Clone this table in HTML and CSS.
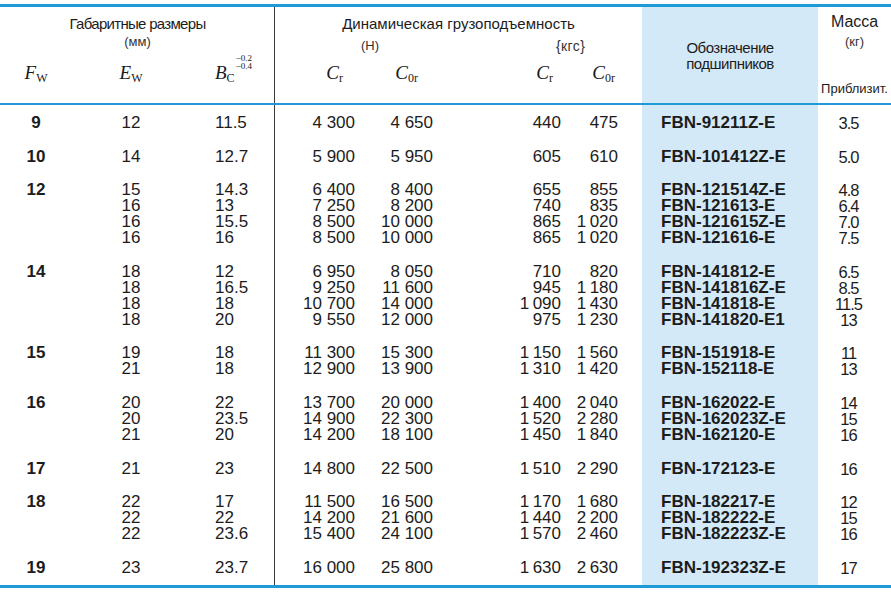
FILE: index.html
```html
<!DOCTYPE html>
<html lang="ru">
<head>
<meta charset="utf-8">
<title>Подшипники FBN</title>
<link rel="stylesheet" href="styles.css">
</head>
<body>
<table class="spec">
  <colgroup>
    <col class="w1"><col class="w2"><col class="w3"><col class="w4"><col class="w5"><col class="w6"><col class="w7"><col class="w8"><col class="w9">
  </colgroup>
  <thead>
    <tr class="hr1">
      <th colspan="3" class="grp grp-a sep">Габаритные размеры</th>
      <th colspan="4" class="grp">Динамическая грузоподъемность</th>
      <th rowspan="3" class="desig-h">Обозначение<br>подшипников</th>
      <th rowspan="3" class="mass-h">
        <div class="mass-t">Масса</div>
        <div class="mass-u">(кг)</div>
        <div class="approx">Приблизит.</div>
      </th>
    </tr>
    <tr class="hr2">
      <th colspan="3" class="unit sep">(мм)</th>
      <th colspan="2" class="unit u-n">(Н)</th>
      <th colspan="2" class="unit u-k">{кгс}</th>
    </tr>
    <tr class="hr3">
      <th class="sym s1"><i>F</i><sub>W</sub></th>
      <th class="sym s2"><i>E</i><sub>W</sub></th>
      <th class="sym s3 sep"><i>B</i><sub>C</sub><span class="tol"><span>−0.2</span><span>−0.4</span></span></th>
      <th class="sym s4"><i>C</i><sub>r</sub></th>
      <th class="sym s5"><i>C</i><sub>0r</sub></th>
      <th class="sym s6"><i>C</i><sub>r</sub></th>
      <th class="sym s7"><i>C</i><sub>0r</sub></th>
    </tr>
  </thead>
  <tbody>
    <tr class="first">
      <td class="c1">9</td><td class="c2">12</td><td class="c3 sep">11.5</td>
      <td class="c4">4 300</td><td class="c5">4 650</td><td class="c6">440</td><td class="c7">475</td>
      <td class="c8">FBN-91211Z-E</td><td class="c9">3.5</td>
    </tr>
    <tr>
      <td class="c1">10</td><td class="c2">14</td><td class="c3 sep">12.7</td>
      <td class="c4">5 900</td><td class="c5">5 950</td><td class="c6">605</td><td class="c7">610</td>
      <td class="c8">FBN-101412Z-E</td><td class="c9">5.0</td>
    </tr>
    <tr>
      <td class="c1">12</td><td class="c2">15<br>16<br>16<br>16</td><td class="c3 sep">14.3<br>13<br>15.5<br>16</td>
      <td class="c4">6 400<br>7 250<br>8 500<br>8 500</td><td class="c5">8 400<br>8 200<br>10 000<br>10 000</td>
      <td class="c6">655<br>740<br>865<br>865</td><td class="c7">855<br>835<br>1&thinsp;020<br>1&thinsp;020</td>
      <td class="c8">FBN-121514Z-E<br>FBN-121613-E<br>FBN-121615Z-E<br>FBN-121616-E</td><td class="c9">4.8<br>6.4<br>7.0<br>7.5</td>
    </tr>
    <tr>
      <td class="c1">14</td><td class="c2">18<br>18<br>18<br>18</td><td class="c3 sep">12<br>16.5<br>18<br>20</td>
      <td class="c4">6 950<br>9 250<br>10 700<br>9 550</td><td class="c5">8 050<br>11 600<br>14 000<br>12 000</td>
      <td class="c6">710<br>945<br>1&thinsp;090<br>975</td><td class="c7">820<br>1&thinsp;180<br>1&thinsp;430<br>1&thinsp;230</td>
      <td class="c8">FBN-141812-E<br>FBN-141816Z-E<br>FBN-141818-E<br>FBN-141820-E1</td><td class="c9">6.5<br>8.5<br>11.5<br>13</td>
    </tr>
    <tr>
      <td class="c1">15</td><td class="c2">19<br>21</td><td class="c3 sep">18<br>18</td>
      <td class="c4">11 300<br>12 900</td><td class="c5">15 300<br>13 900</td>
      <td class="c6">1&thinsp;150<br>1&thinsp;310</td><td class="c7">1&thinsp;560<br>1&thinsp;420</td>
      <td class="c8">FBN-151918-E<br>FBN-152118-E</td><td class="c9">11<br>13</td>
    </tr>
    <tr>
      <td class="c1">16</td><td class="c2">20<br>20<br>21</td><td class="c3 sep">22<br>23.5<br>20</td>
      <td class="c4">13 700<br>14 900<br>14 200</td><td class="c5">20 000<br>22 300<br>18 100</td>
      <td class="c6">1&thinsp;400<br>1&thinsp;520<br>1&thinsp;450</td><td class="c7">2&thinsp;040<br>2&thinsp;280<br>1&thinsp;840</td>
      <td class="c8">FBN-162022-E<br>FBN-162023Z-E<br>FBN-162120-E</td><td class="c9">14<br>15<br>16</td>
    </tr>
    <tr>
      <td class="c1">17</td><td class="c2">21</td><td class="c3 sep">23</td>
      <td class="c4">14 800</td><td class="c5">22 500</td><td class="c6">1&thinsp;510</td><td class="c7">2&thinsp;290</td>
      <td class="c8">FBN-172123-E</td><td class="c9">16</td>
    </tr>
    <tr>
      <td class="c1">18</td><td class="c2">22<br>22<br>22</td><td class="c3 sep">17<br>22<br>23.6</td>
      <td class="c4">11 500<br>14 200<br>15 400</td><td class="c5">16 500<br>21 600<br>24 100</td>
      <td class="c6">1&thinsp;170<br>1&thinsp;440<br>1&thinsp;570</td><td class="c7">1&thinsp;680<br>2&thinsp;200<br>2&thinsp;460</td>
      <td class="c8">FBN-182217-E<br>FBN-182222-E<br>FBN-182223Z-E</td><td class="c9">12<br>15<br>16</td>
    </tr>
    <tr class="last">
      <td class="c1">19</td><td class="c2">23</td><td class="c3 sep">23.7</td>
      <td class="c4">16 000</td><td class="c5">25 800</td><td class="c6">1&thinsp;630</td><td class="c7">2&thinsp;630</td>
      <td class="c8">FBN-192323Z-E</td><td class="c9">17</td>
    </tr>
  </tbody>
</table>
</body>
</html>
```

FILE: styles.css
```css
html, body {
  margin: 0;
  padding: 0;
  background: #ffffff;
}

body {
  font-family: "Liberation Sans", Arial, sans-serif;
  color: #1c1c1c;
}

.spec {
  width: 891px;
  margin-top: 4px;
  border-collapse: separate;
  border-spacing: 0;
  table-layout: fixed;
  border-top: 3px solid #1e9bd6;
  border-bottom: 3px solid #1e9bd6;
}

.w1 { width: 72px; }
.w2 { width: 118px; }
.w3 { width: 85px; }
.w4 { width: 90px; }
.w5 { width: 78px; }
.w6 { width: 128px; }
.w7 { width: 71px; }
.w8 { width: 176px; }
.w9 { width: 73px; }

th, td {
  padding: 0;
  white-space: nowrap;
  vertical-align: top;
  font-weight: normal;
}

.sep {
  box-shadow: inset -1px 0 0 #3a3a3a;
}

/* header */
.hr1 th { height: 26px; box-sizing: border-box; }
.hr2 th { height: 21px; box-sizing: border-box; }

.grp {
  font-size: 15px;
  line-height: 16px;
  padding: 9px 0 1px;
  text-align: center;
}

.grp-a {
  letter-spacing: -0.7px;
}

.unit {
  font-size: 13px;
  line-height: 16px;
  padding: 1px 0 4px;
  text-align: center;
  color: #333;
}

.u-n {
  text-align: left;
  padding: 5px 0 0 86px;
}

.u-k {
  text-align: left;
  padding: 5px 0 0 113px;
  font-size: 14px;
  letter-spacing: 0.4px;
}

.sym {
  font-family: "Liberation Serif", "Times New Roman", serif;
  font-size: 19px;
  line-height: 20px;
  height: 51px;
  box-sizing: border-box;
  padding: 9px 0 0;
  border-bottom: 2px solid #1e9bd6;
  color: #1a1a1a;
}

.sym sub {
  font-size: 12px;
  vertical-align: -3px;
  line-height: 0;
}

.s1, .s2 { text-align: center; }
.s3 { text-align: left; padding-left: 25px; }
.s4 { text-align: right; padding-right: 22px; }
.s5 { text-align: right; padding-right: 25px; }
.s6 { text-align: right; padding-right: 18px; }
.s7 { text-align: right; padding-right: 27px; }

.tol {
  display: inline-block;
  font-size: 9px;
  line-height: 8px;
  vertical-align: top;
  margin-top: -9px;
  margin-left: 1px;
}

.tol span {
  display: block;
}

.desig-h {
  background: #d4e9f8;
  font-size: 15px;
  line-height: 16px;
  letter-spacing: -0.5px;
  padding-top: 33px;
  text-align: center;
  border-bottom: 2px solid #1e9bd6;
}

.mass-h {
  text-align: center;
  padding-top: 5px;
  border-bottom: 2px solid #1e9bd6;
}

.mass-t {
  font-size: 16px;
  line-height: 20px;
}

.mass-u {
  font-size: 13px;
  line-height: 20px;
  color: #333;
}

.approx {
  font-size: 13px;
  line-height: 16px;
  margin-top: 29px;
}

/* body */
tbody td {
  font-size: 17px;
  line-height: 16px;
  padding-top: 9px;
  padding-bottom: 8.6px;
}

tbody tr.first td {
  padding-top: 10px;
}

tbody tr.last td {
  padding-bottom: 9.4px;
}

.c1 { text-align: center; font-weight: bold; }
.c2 { text-align: center; }
.c3 { text-align: left; padding-left: 25px; }
.c4 { text-align: right; padding-right: 10px; }
.c5 { text-align: right; padding-right: 10px; }
.c6 { text-align: right; padding-right: 10px; }
.c7 { text-align: right; padding-right: 24px; }
.c8 {
  background: #d4e9f8;
  font-weight: bold;
  padding-left: 19px;
}
.c9 {
  text-align: center;
  padding-right: 12px;
  font-size: 16.5px;
  letter-spacing: -1px;
}
```
